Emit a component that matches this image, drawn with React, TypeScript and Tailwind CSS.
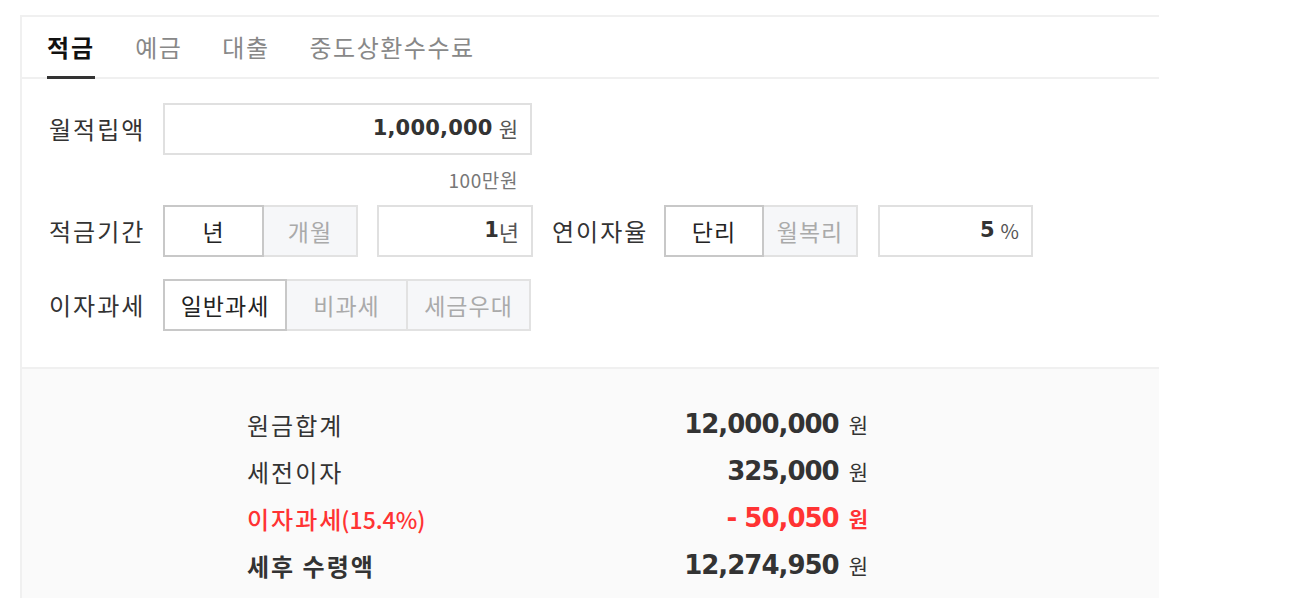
import React from "react";

const KR = "font-['Noto_Sans_CJK_KR','Noto_Sans',sans-serif]";
const NUM = "font-['DejaVu_Sans','Noto_Sans_CJK_KR',sans-serif]";

function Toggle({ items, widths }: { items: { label: string; active?: boolean }[]; widths: string[] }) {
  return (
    <div className="flex h-[52px]">
      {items.map((it, i) => (
        <div
          key={it.label}
          className={
            (it.active
              ? "bg-white border-[#c8c8c8] text-[#222] z-10 "
              : "bg-[#f6f7f9] border-[#e2e2e2] text-[#aaaaaa] ") +
            (i > 0 ? "-ml-[2px] " : "") +
            "flex items-center justify-center border-2 text-[23px] tracking-[1px] " +
            KR +
            " " +
            widths[i]
          }
        >
          {it.label}
        </div>
      ))}
    </div>
  );
}

function Label({ children, w }: { children: React.ReactNode; w: string }) {
  return <div className={`${w} shrink-0 text-[24px] tracking-[2px] text-[#333] ${KR}`}>{children}</div>;
}

export default function App() {
  return (
    <div className="min-h-screen bg-white pl-[20px] pt-[15px]">
      <div className="w-[1139px] border-l-2 border-t-2 border-[#f0f0f0]">
        {/* Tabs */}
        <div className={`flex h-[62px] gap-[40px] border-b-2 border-[#f0f0f0] pl-[25px] ${KR}`}>
          <div className="-mb-[2px] flex items-center border-b-[3px] border-[#333] pt-[1px] text-[24px] font-bold tracking-[2px] text-[#111]">
            적금
          </div>
          <div className="flex items-center text-[24px] tracking-[1.5px] text-[#888]">예금</div>
          <div className="flex items-center text-[24px] tracking-[1.5px] text-[#888]">대출</div>
          <div className="flex items-center text-[24px] tracking-[1.5px] text-[#888]">중도상환수수료</div>
        </div>

        {/* Form */}
        <div className="border-b-2 border-[#f0f0f0] pb-[36px] pl-[27px] pt-[24px]">
          <div className="flex h-[52px] items-center">
            <Label w="w-[114px]">월적립액</Label>
            <div className="flex h-[52px] w-[369px] items-center justify-end border-2 border-[#e0e0e0] bg-white pr-[12px]">
              <span className={`${NUM} text-[21px] font-bold tracking-[0.2px] text-[#333]`}>1,000,000</span>
              <span className={`${KR} ml-[6px] text-[21px] text-[#555]`}>원</span>
            </div>
          </div>
          <div className="flex h-[50px] items-center">
            <div className="w-[114px]" />
            <div className={`w-[369px] pr-[14px] text-right text-[19px] tracking-[0.6px] text-[#777] ${KR}`}>100만원</div>
          </div>
          <div className="flex h-[52px] items-center">
            <Label w="w-[114px]">적금기간</Label>
            <Toggle
              items={[{ label: "년", active: true }, { label: "개월" }]}
              widths={["w-[101px]", "w-[96px]"]}
            />
            <div className="ml-[19px] flex h-[52px] w-[156px] items-center justify-end border-2 border-[#e0e0e0] bg-white pr-[12px]">
              <span className={`${NUM} text-[21px] font-bold text-[#333]`}>1</span>
              <span className={`${KR} text-[22px] text-[#555]`}>년</span>
            </div>
            <div className="ml-[19px]">
              <Label w="w-[112px]">연이자율</Label>
            </div>
            <Toggle
              items={[{ label: "단리", active: true }, { label: "월복리" }]}
              widths={["w-[100px]", "w-[96px]"]}
            />
            <div className="ml-[20px] flex h-[52px] w-[155px] items-center justify-end border-2 border-[#e0e0e0] bg-white pr-[12px]">
              <span className={`${NUM} text-[21px] font-bold text-[#333]`}>5</span>
              <span className={`${KR} ml-[6px] text-[20px] text-[#555]`}>%</span>
            </div>
          </div>
          <div className="mt-[22px] flex h-[52px] items-center">
            <Label w="w-[114px]">이자과세</Label>
            <Toggle
              items={[{ label: "일반과세", active: true }, { label: "비과세" }, { label: "세금우대" }]}
              widths={["w-[124px]", "w-[123px]", "w-[125px]"]}
            />
          </div>
        </div>

        {/* Results */}
        <div className="bg-[#fafafa] pb-[20px] pl-[225px] pt-[32px]">
          {[
            { label: "원금합계", sub: "", value: "12,000,000", cls: "text-[#333]", lcls: "text-[#333]" },
            { label: "세전이자", sub: "", value: "325,000", cls: "text-[#333]", lcls: "text-[#333]" },
            { label: "이자과세", sub: "(15.4%)", value: "- 50,050", cls: "text-[#ff3333]", lcls: "text-[#ff3333] font-medium", red: true },
            { label: "세후 수령액", sub: "", value: "12,274,950", cls: "text-[#333]", lcls: "text-[#333] font-bold" },
          ].map((r) => (
            <div key={r.label} className="flex h-[47px] w-[621px] items-center justify-between">
              <div className={`${KR} text-[24px] ${r.lcls}`}>
                <span className="tracking-[2px]">{r.label}</span>
                {r.sub && <span className="-ml-[2px] text-[23px] tracking-[0px]">{r.sub}</span>}
              </div>
              <div className="flex items-center">
                <span className={`${NUM} text-[26px] font-bold tracking-[-1px] ${r.cls}`}>{r.value}</span>
                <span className={`${KR} ml-[10px] text-[21px] ${r.red ? "font-bold text-[#ff3333]" : "text-[#333]"}`}>원</span>
              </div>
            </div>
          ))}
        </div>
      </div>
    </div>
  );
}
